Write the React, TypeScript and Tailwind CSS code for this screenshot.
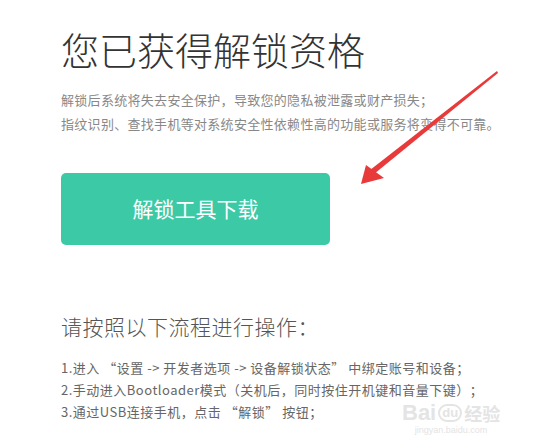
export default function App() {
  return (
    <div
      lang="zh-CN"
      className="relative h-[447px] w-[545px] overflow-hidden bg-white font-['Microsoft_YaHei','Noto_Sans_CJK_SC',sans-serif] [text-spacing-trim:space-all]"
    >
      <div className="flex flex-col items-start pl-[61px] pt-[30px]">
        <h1 className="text-[38px] font-light leading-[38px] text-[#333]">您已获得解锁资格</h1>
        <div className="mt-[20px] text-[13px] leading-[24px] tracking-[0.3px] text-[#888]">
          <p>解锁后系统将失去安全保护，导致您的隐私被泄露或财产损失；</p>
          <p>指纹识别、查找手机等对系统安全性依赖性高的功能或服务将变得不可靠。</p>
        </div>
        <button className="mt-[37px] flex h-[72px] w-[269px] items-center justify-center rounded-[5px] bg-[#3ccaa6] text-[21px] text-white">
          解锁工具下载
        </button>
        <h2 className="mt-[67px] text-[21px] font-light leading-[28px] tracking-[0.5px] text-[#555]">请按照以下流程进行操作：</h2>
        <div className="mt-[17px] text-[13px] leading-[22px] tracking-[0.5px] text-[#666]">
          <p>1.进入 “设置 -&gt; 开发者选项 -&gt; 设备解锁状态” 中绑定账号和设备；</p>
          <p>2.手动进入Bootloader模式（关机后，同时按住开机键和音量下键）；</p>
          <p>3.通过USB连接手机，点击 “解锁” 按钮；</p>
        </div>
      </div>

      {/* red annotation arrow */}
      <svg className="absolute left-0 top-0" width="545" height="447" viewBox="0 0 545 447">
        <polygon points="497,71 498,73 374,174 370,170" fill="#e83a3a" />
        <polygon points="361,184 366,165 384,178" fill="#e83a3a" />
      </svg>

      {/* watermark */}
      <div className="absolute left-[402px] top-[402px] flex flex-col items-center text-[#e4e4e4]">
        <div className="flex items-center gap-[2px] font-['Liberation_Sans',sans-serif] text-[22px] font-bold leading-[22px]">
          <span>Bai</span>
          <span className="rounded-full border-2 border-[#e4e4e4] px-[2px] text-[13px] leading-[14px]">du</span>
          <span className="font-['Noto_Sans_CJK_SC',sans-serif] text-[18px]">经验</span>
        </div>
        <span className="font-['Liberation_Sans',sans-serif] text-[9px] leading-[12px]">jingyan.baidu.com</span>
      </div>
    </div>
  );
}
